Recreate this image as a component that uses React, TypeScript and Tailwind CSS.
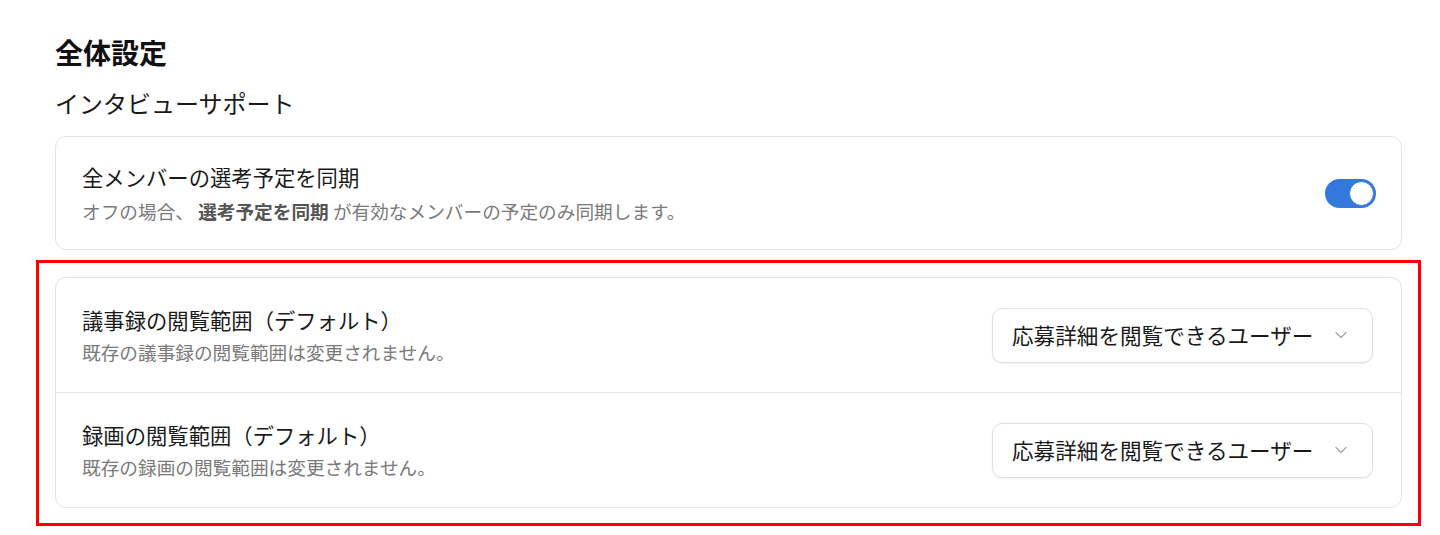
import React from "react";

function Chevron() {
  return (
    <svg width="20" height="20" viewBox="0 0 24 24" fill="none" stroke="#a8a8a8" strokeWidth="1.6" strokeLinecap="round" strokeLinejoin="round">
      <path d="M6 9l6 6 6-6" />
    </svg>
  );
}

function Select() {
  return (
    <div className="flex h-[55px] w-[381px] items-center justify-between rounded-[10px] border border-[#e0e0e0] bg-white pl-[19px] pr-[21px] shadow-[0_1px_2px_rgba(0,0,0,0.06)]">
      <span className="text-[21.6px] leading-[30px] text-[#1a1a1a]">応募詳細を閲覧できるユーザー</span>
      <Chevron />
    </div>
  );
}

function Row({ title, sub, last }: { title: string; sub: string; last?: boolean }) {
  return (
    <div className={"flex items-center justify-between pl-[26px] pr-[28px]" + (last ? " h-[114px]" : " h-[115px] border-b border-[#e6e6e6]")}>
      <div className="flex flex-col">
        <span className="text-[21.33px] leading-[30px] text-[#1a1a1a] [text-spacing-trim:space-all]">{title}</span>
        <span className="mt-[3px] text-[18.67px] leading-[28px] text-[#7a7a7a]">{sub}</span>
      </div>
      <Select />
    </div>
  );
}

export default function App() {
  return (
    <div className="min-h-[535px] bg-white pl-[55px] pr-[38px] pt-[31px] font-['Noto_Sans_CJK_JP','Noto_Sans',sans-serif]">
      <h1 className="text-[28px] font-bold leading-[42px] text-[#111]">全体設定</h1>
      <h2 className="mt-[12px] text-[24px] leading-[36px] text-[#1a1a1a]">インタビューサポート</h2>

      <div className="mt-[15px] rounded-[11px] border border-[#e3e3e3] bg-white">
        <div className="flex h-[112px] items-center justify-between pl-[26px] pr-[25px]">
          <div className="flex flex-col">
            <span className="text-[21.33px] leading-[32px] text-[#1a1a1a]">全メンバーの選考予定を同期</span>
            <span className="mt-[4px] text-[18.67px] leading-[28px] text-[#7a7a7a]">
              オフの場合、 <span className="font-bold text-[#555]">選考予定を同期</span> が有効なメンバーの予定のみ同期します。
            </span>
          </div>
          <div className="flex h-[29px] w-[51px] items-center justify-end rounded-full bg-[#3478db] p-[2px]">
            <div className="h-[25px] w-[25px] rounded-full border-[1.5px] border-[#3478db] bg-white" />
          </div>
        </div>
      </div>

      <div className="mt-[10px] ml-[-19px] mr-[-19px] border-[3px] border-[#ff0000] px-[16px] pt-[14px] pb-[15px]">
        <div className="rounded-[11px] border border-[#e3e3e3] bg-white">
          <Row title="議事録の閲覧範囲（デフォルト）" sub="既存の議事録の閲覧範囲は変更されません。" />
          <Row title="録画の閲覧範囲（デフォルト）" sub="既存の録画の閲覧範囲は変更されません。" last />
        </div>
      </div>
    </div>
  );
}
